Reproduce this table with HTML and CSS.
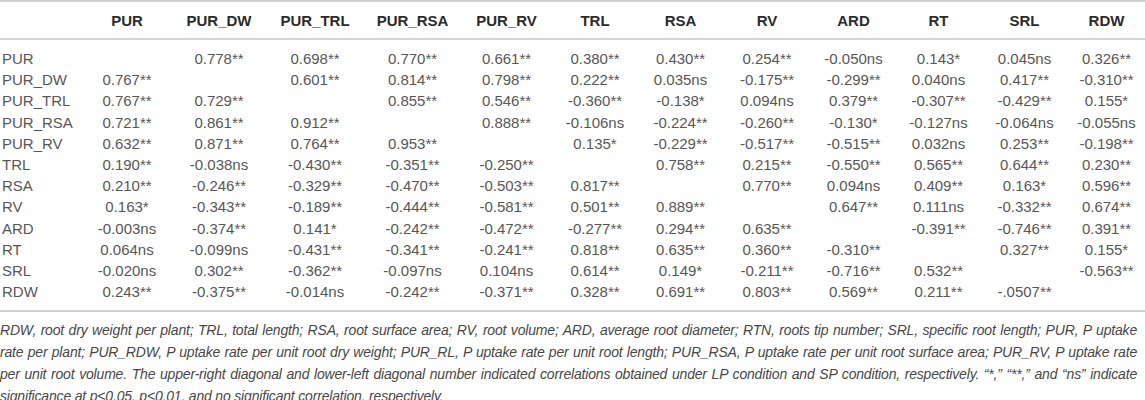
FILE: index.html
```html
<!DOCTYPE html>
<html lang="en">
<head>
  <meta charset="UTF-8">
  <meta name="viewport" content="width=device-width, initial-scale=1.0">
  <link rel="stylesheet" href="styles.css">
</head>
<body>
  <table class="corr">
    <colgroup>
      <col class="c-label">
      <col class="c-1"><col class="c-2"><col class="c-3"><col class="c-4">
      <col class="c-5"><col class="c-6"><col class="c-7"><col class="c-8">
      <col class="c-9"><col class="c-10"><col class="c-11"><col class="c-12">
    </colgroup>
    <thead>
      <tr>
        <th></th>
        <th>PUR</th><th>PUR_DW</th><th>PUR_TRL</th><th>PUR_RSA</th><th>PUR_RV</th><th>TRL</th>
        <th>RSA</th><th>RV</th><th>ARD</th><th>RT</th><th>SRL</th><th>RDW</th>
      </tr>
    </thead>
    <tbody>
      <tr><td>PUR</td><td></td><td>0.778**</td><td>0.698**</td><td>0.770**</td><td>0.661**</td><td>0.380**</td><td>0.430**</td><td>0.254**</td><td>-0.050ns</td><td>0.143*</td><td>0.045ns</td><td>0.326**</td></tr>
      <tr><td>PUR_DW</td><td>0.767**</td><td></td><td>0.601**</td><td>0.814**</td><td>0.798**</td><td>0.222**</td><td>0.035ns</td><td>-0.175**</td><td>-0.299**</td><td>0.040ns</td><td>0.417**</td><td>-0.310**</td></tr>
      <tr><td>PUR_TRL</td><td>0.767**</td><td>0.729**</td><td></td><td>0.855**</td><td>0.546**</td><td>-0.360**</td><td>-0.138*</td><td>0.094ns</td><td>0.379**</td><td>-0.307**</td><td>-0.429**</td><td>0.155*</td></tr>
      <tr><td>PUR_RSA</td><td>0.721**</td><td>0.861**</td><td>0.912**</td><td></td><td>0.888**</td><td>-0.106ns</td><td>-0.224**</td><td>-0.260**</td><td>-0.130*</td><td>-0.127ns</td><td>-0.064ns</td><td>-0.055ns</td></tr>
      <tr><td>PUR_RV</td><td>0.632**</td><td>0.871**</td><td>0.764**</td><td>0.953**</td><td></td><td>0.135*</td><td>-0.229**</td><td>-0.517**</td><td>-0.515**</td><td>0.032ns</td><td>0.253**</td><td>-0.198**</td></tr>
      <tr><td>TRL</td><td>0.190**</td><td>-0.038ns</td><td>-0.430**</td><td>-0.351**</td><td>-0.250**</td><td></td><td>0.758**</td><td>0.215**</td><td>-0.550**</td><td>0.565**</td><td>0.644**</td><td>0.230**</td></tr>
      <tr><td>RSA</td><td>0.210**</td><td>-0.246**</td><td>-0.329**</td><td>-0.470**</td><td>-0.503**</td><td>0.817**</td><td></td><td>0.770**</td><td>0.094ns</td><td>0.409**</td><td>0.163*</td><td>0.596**</td></tr>
      <tr><td>RV</td><td>0.163*</td><td>-0.343**</td><td>-0.189**</td><td>-0.444**</td><td>-0.581**</td><td>0.501**</td><td>0.889**</td><td></td><td>0.647**</td><td>0.111ns</td><td>-0.332**</td><td>0.674**</td></tr>
      <tr><td>ARD</td><td>-0.003ns</td><td>-0.374**</td><td>0.141*</td><td>-0.242**</td><td>-0.472**</td><td>-0.277**</td><td>0.294**</td><td>0.635**</td><td></td><td>-0.391**</td><td>-0.746**</td><td>0.391**</td></tr>
      <tr><td>RT</td><td>0.064ns</td><td>-0.099ns</td><td>-0.431**</td><td>-0.341**</td><td>-0.241**</td><td>0.818**</td><td>0.635**</td><td>0.360**</td><td>-0.310**</td><td></td><td>0.327**</td><td>0.155*</td></tr>
      <tr><td>SRL</td><td>-0.020ns</td><td>0.302**</td><td>-0.362**</td><td>-0.097ns</td><td>0.104ns</td><td>0.614**</td><td>0.149*</td><td>-0.211**</td><td>-0.716**</td><td>0.532**</td><td></td><td>-0.563**</td></tr>
      <tr><td>RDW</td><td>0.243**</td><td>-0.375**</td><td>-0.014ns</td><td>-0.242**</td><td>-0.371**</td><td>0.328**</td><td>0.691**</td><td>0.803**</td><td>0.569**</td><td>0.211**</td><td>-.0507**</td><td></td></tr>
    </tbody>
  </table>
  <p class="note">RDW, root dry weight per plant; TRL, total length; RSA, root surface area; RV, root volume; ARD, average root diameter; RTN, roots tip number; SRL, specific root length; PUR, P uptake rate per plant; PUR_RDW, P uptake rate per unit root dry weight; PUR_RL, P uptake rate per unit root length; PUR_RSA, P uptake rate per unit root surface area; PUR_RV, P uptake rate per unit root volume. The upper-right diagonal and lower-left diagonal number indicated correlations obtained under LP condition and SP condition, respectively. “*,” “**,” and “ns” indicate significance at p&lt;0.05, p&lt;0.01, and no significant correlation, respectively.</p>
</body>
</html>
```

FILE: styles.css
```css
* {
  margin: 0;
  padding: 0;
  box-sizing: border-box;
}

body {
  width: 1145px;
  background: #fff;
  font-family: "Liberation Sans", Arial, sans-serif;
  color: #575757;
}

.corr {
  width: 1145px;
  table-layout: fixed;
  border-collapse: collapse;
  border-top: 2px solid #cfcfcf;
  border-bottom: 2px solid #cfcfcf;
  font-size: 15px;
}

.c-label { width: 82px; }
.c-1 { width: 90px; }
.c-2 { width: 94px; }
.c-3 { width: 98px; }
.c-4 { width: 97px; }
.c-5 { width: 91px; }
.c-6 { width: 86px; }
.c-7 { width: 85px; }
.c-8 { width: 88px; }
.c-9 { width: 85px; }
.c-10 { width: 85px; }
.c-11 { width: 87px; }
.c-12 { width: 77px; }

.corr th {
  height: 38px;
  font-weight: bold;
  color: #2b2b2b;
  text-align: center;
  vertical-align: middle;
  border-bottom: 2px solid #d4d4d4;
}

.corr td {
  line-height: 21.2px;
  text-align: center;
  white-space: nowrap;
}

.corr td:first-child {
  text-align: left;
  padding-left: 2px;
}

.corr tbody tr:first-child td {
  padding-top: 8px;
}

.corr tbody tr:last-child td {
  padding-bottom: 8px;
}

.note {
  padding: 7px 8px 0 0;
  font-size: 14px;
  font-style: italic;
  letter-spacing: -0.18px;
  line-height: 22px;
  text-align: justify;
  color: #474747;
}
```
